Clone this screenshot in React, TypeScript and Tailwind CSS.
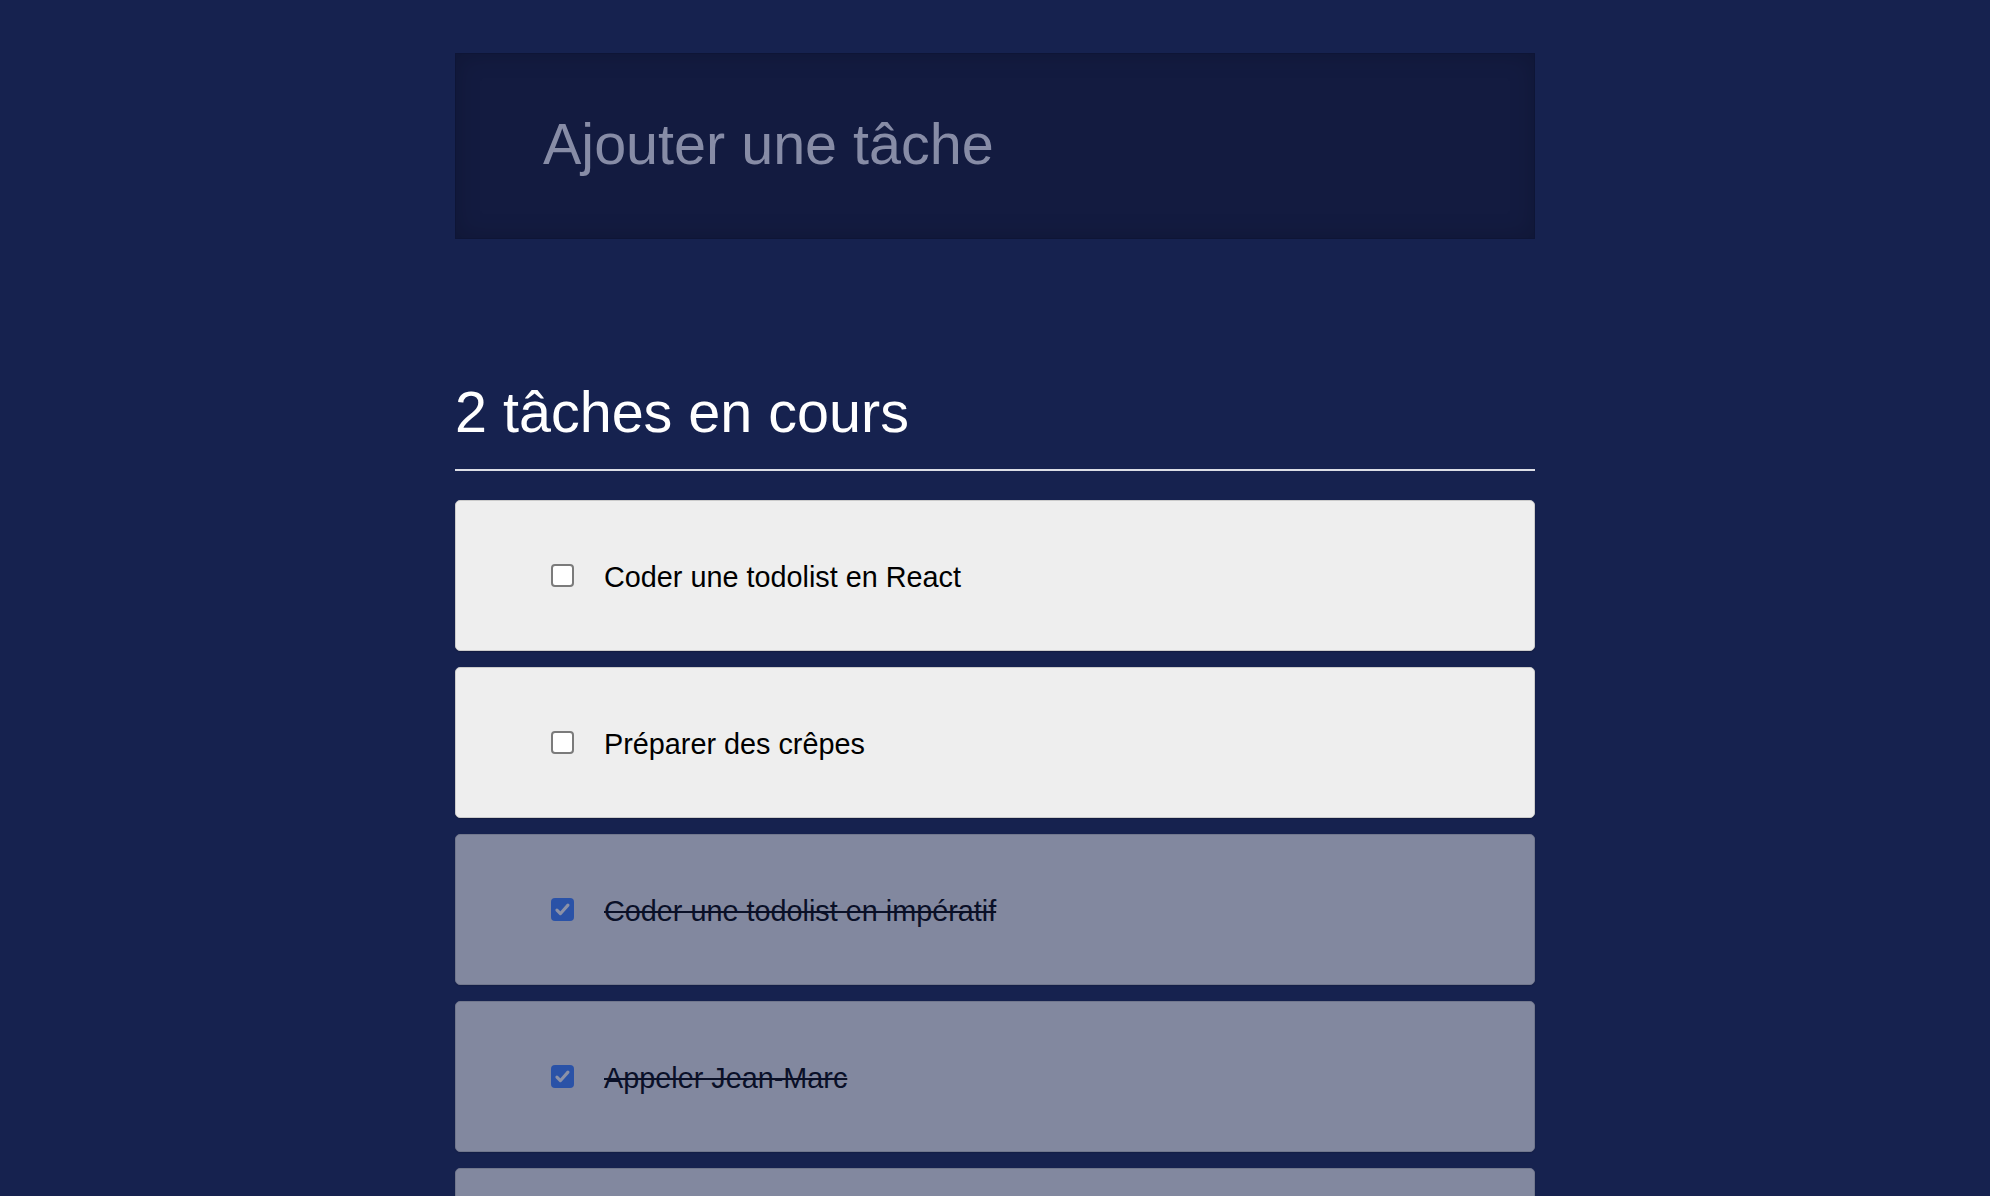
import { useState } from 'react'

interface Todo {
  id: number
  label: string
  done: boolean
}

const initialTodos: Todo[] = [
  { id: 1, label: 'Coder une todolist en React', done: false },
  { id: 2, label: 'Préparer des crêpes', done: false },
  { id: 3, label: 'Coder une todolist en impératif', done: true },
  { id: 4, label: 'Appeler Jean-Marc', done: true },
  { id: 5, label: 'Faire les courses', done: true },
]

function Checkbox({ checked, onToggle }: { checked: boolean; onToggle: () => void }) {
  if (checked) {
    return (
      <button
        onClick={onToggle}
        className="w-[23px] h-[23px] rounded-[4px] bg-[#3f82ff] flex items-center justify-center shrink-0"
      >
        <svg viewBox="0 0 16 16" className="w-[19px] h-[19px]" fill="none">
          <path d="M3.3 8.6l2.9 2.9 6.4-7.2" stroke="white" strokeWidth="2.6" strokeLinecap="round" strokeLinejoin="round" />
        </svg>
      </button>
    )
  }
  return (
    <button
      onClick={onToggle}
      className="w-[23px] h-[23px] rounded-[4px] bg-white border-2 border-[#7b7b7b] shrink-0"
    />
  )
}

export default function App() {
  const [todos, setTodos] = useState(initialTodos)
  const [value, setValue] = useState('')

  const remaining = todos.filter((t) => !t.done).length

  const toggle = (id: number) =>
    setTodos(todos.map((t) => (t.id === id ? { ...t, done: !t.done } : t)))

  return (
    <div className="min-h-screen bg-[#16224f] font-['Liberation_Sans',Arial,sans-serif]">
      <div className="w-[1080px] mx-auto pt-[53px] pb-10">
        {/* New todo input */}
        <input
          value={value}
          onChange={(e) => setValue(e.target.value)}
          placeholder="Ajouter une tâche"
          className="block w-full h-[186px] bg-[#131b40] border border-[#0e1536] shadow-[inset_0_0_24px_rgba(0,0,0,0.18)] pl-[87px] pb-[5px] text-[57.5px] text-white placeholder:text-[#878ca6] outline-none"
        />

        {/* Counter */}
        <h2 className="mt-[145px] text-[57.5px] leading-none text-white pb-[27px] border-b-2 border-[#dcdee6]">
          {remaining} tâches en cours
        </h2>

        {/* List */}
        <ul className="mt-[29px] flex flex-col gap-[16px]">
          {todos.map((todo) => (
            <li
              key={todo.id}
              className={
                'h-[151px] rounded-[5px] bg-[#eeeeee] border border-[#cbcbcb] shadow-[0_1px_1px_rgba(0,0,0,0.2)] flex items-center pl-[95px] gap-[30px] ' +
                (todo.done ? 'opacity-50' : '')
              }
            >
              <Checkbox checked={todo.done} onToggle={() => toggle(todo.id)} />
              <span className={'text-[28.8px] text-black pt-[5px] ' + (todo.done ? 'line-through' : '')}>
                {todo.label}
              </span>
            </li>
          ))}
        </ul>
      </div>
    </div>
  )
}
